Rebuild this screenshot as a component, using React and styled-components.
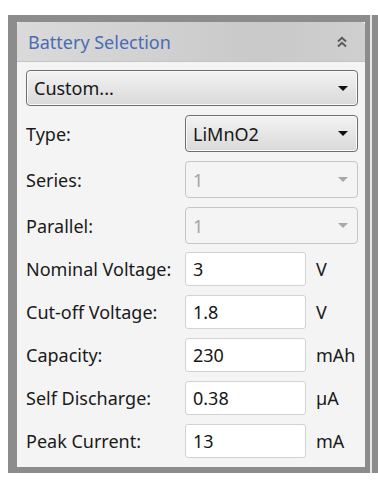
import styled, { createGlobalStyle } from "styled-components";

const Global = createGlobalStyle`
  body {
    margin: 0;
    background: #ffffff;
    font-family: "Noto Sans", "Open Sans", sans-serif;
  }
`;

export default function App() {
  return (
    <>
      <Global />
      <Frame>
        <Panel>
          <Header>
            <Title>Battery Selection</Title>
            <svg width="10" height="12" viewBox="0 0 10 12">
              <path d="M1 5.5 L5 1.8 L9 5.5 M1 10.5 L5 6.8 L9 10.5" fill="none" stroke="#5a5a5a" strokeWidth="2" />
            </svg>
          </Header>
          <Content>
            <Select $wide>
              <span>Custom...</span>
              <Arrow />
            </Select>
            <DropRow>
              <Label>Type:</Label>
              <Select>
                <span>LiMnO2</span>
                <Arrow />
              </Select>
            </DropRow>
            <DropRow>
              <Label>Series:</Label>
              <Select $disabled>
                <span>1</span>
                <Arrow $disabled />
              </Select>
            </DropRow>
            <DropRow>
              <Label>Parallel:</Label>
              <Select $disabled>
                <span>1</span>
                <Arrow $disabled />
              </Select>
            </DropRow>
            <Fields>
              {fields.map((f) => (
                <FieldRow key={f.label}>
                  <Label>{f.label}</Label>
                  <Input>{f.value}</Input>
                  <Unit>{f.unit}</Unit>
                </FieldRow>
              ))}
            </Fields>
          </Content>
        </Panel>
      </Frame>
    </>
  );
}

const fields = [
  { label: "Nominal Voltage:", value: "3", unit: "V" },
  { label: "Cut-off Voltage:", value: "1.8", unit: "V" },
  { label: "Capacity:", value: "230", unit: "mAh" },
  { label: "Self Discharge:", value: "0.38", unit: "µA" },
  { label: "Peak Current:", value: "13", unit: "mA" },
];

const Frame = styled.div`
  margin: 15px 0 0 8px;
  width: 370px;
  height: 458px;
  box-sizing: border-box;
  padding: 7px 13px 6px 9px;
  background: linear-gradient(to left, #8c8c8c 0 6px, #e6e6e6 6px 8px, #8c8c8c 8px);
  display: flex;
`;

const Panel = styled.div`
  flex: 1;
  display: flex;
  flex-direction: column;
  background: #f4f4f4;
`;

const Header = styled.div`
  height: 39px;
  display: flex;
  align-items: center;
  justify-content: space-between;
  padding: 0 18px 0 11px;
  border-radius: 4px 4px 0 0;
  background: linear-gradient(to right, #dadada, #c9c9c9 70%, #cfcfcf);
  border-bottom: 1px solid #c4c4c4;
  svg {
    margin-top: 1px;
  }
`;

const Title = styled.span`
  color: #4a6cb3;
  font-size: 18px;
`;

const Content = styled.div`
  padding: 8px 7px 0 9px;
  display: flex;
  flex-direction: column;
`;

const Select = styled.div`
  box-sizing: border-box;
  height: ${(p) => (p.$wide ? 36 : 37)}px;
  width: ${(p) => (p.$wide ? "100%" : "173px")};
  display: flex;
  align-items: center;
  justify-content: space-between;
  padding: 0 7px 0 7px;
  border-radius: 4px;
  font-size: 18px;
  color: ${(p) => (p.$disabled ? "#a4a4a4" : "#161616")};
  border: 1px solid ${(p) => (p.$disabled ? "#c6c6c6" : "#6e6e6e")};
  background: ${(p) =>
    p.$disabled ? "#f4f4f4" : "linear-gradient(#f3f3f3, #e6e6e6 50%, #d9d9d9)"};
  box-shadow: ${(p) => (p.$disabled ? "none" : "inset 0 0 0 1px #fafafa")};
`;

const Arrow = styled.span`
  width: 0;
  height: 0;
  border-left: 5px solid transparent;
  border-right: 5px solid transparent;
  border-top: 5px solid ${(p) => (p.$disabled ? "#a8a8a8" : "#111")};
  margin-right: 2px;
`;

const DropRow = styled.div`
  display: flex;
  align-items: center;
  margin-top: 9px;
`;

const Label = styled.span`
  width: 159px;
  flex: none;
  font-size: 18px;
  color: #1a1a1a;
`;

const Fields = styled.div`
  display: flex;
  flex-direction: column;
  gap: 9px;
  margin-top: 8px;
`;

const FieldRow = styled.div`
  display: flex;
  align-items: center;
`;

const Input = styled.div`
  box-sizing: border-box;
  width: 121px;
  height: 34px;
  display: flex;
  align-items: center;
  padding-left: 7px;
  background: #fff;
  border: 1px solid #d2d2d2;
  border-radius: 3px;
  font-size: 18px;
  color: #161616;
`;

const Unit = styled.span`
  margin-left: 10px;
  font-size: 18px;
  color: #1a1a1a;
`;
